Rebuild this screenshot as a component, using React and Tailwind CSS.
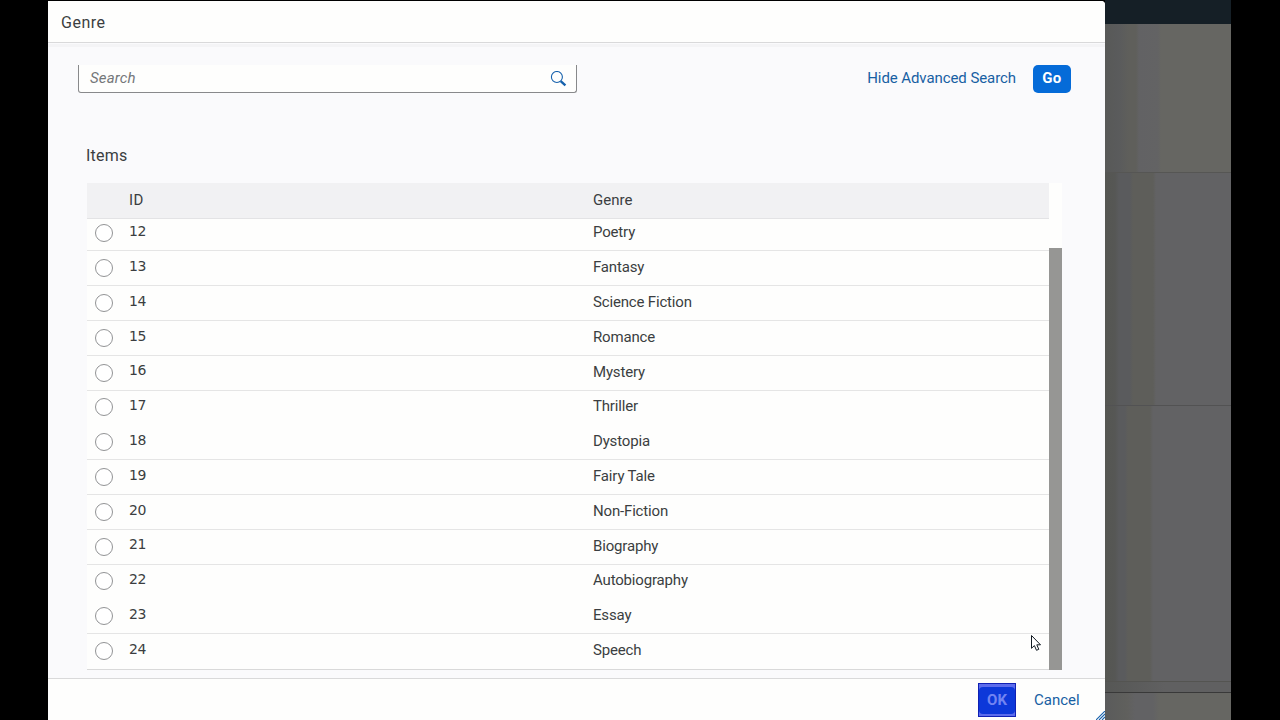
const rows = [
  { id: 12, genre: 'Poetry', cls: 'h-[32px] border-[#e5e5e5]' },
  { id: 13, genre: 'Fantasy', cls: 'h-[35px] border-[#e5e5e5]' },
  { id: 14, genre: 'Science Fiction', cls: 'h-[35px] border-[#e5e5e5]' },
  { id: 15, genre: 'Romance', cls: 'h-[35px] border-[#e5e5e5]' },
  { id: 16, genre: 'Mystery', cls: 'h-[35px] border-[#e5e5e5]', idPad: 'pb-[10px]' },
  { id: 17, genre: 'Thriller', cls: 'h-[35px] border-transparent', idPad: 'pb-[10px]', pad: 'pb-[9px]' },
  { id: 18, genre: 'Dystopia', cls: 'h-[34px] border-[#e5e5e5]' },
  { id: 19, genre: 'Fairy Tale', cls: 'h-[35px] border-[#e5e5e5]' },
  { id: 20, genre: 'Non-Fiction', cls: 'h-[35px] border-[#e5e5e5]' },
  { id: 21, genre: 'Biography', cls: 'h-[35px] border-[#e5e5e5]', idPad: 'pb-[10px]' },
  { id: 22, genre: 'Autobiography', cls: 'h-[35px] border-transparent', idPad: 'pb-[10px]', pad: 'pb-[9px]' },
  { id: 23, genre: 'Essay', cls: 'h-[34px] border-[#e5e5e5]' },
  { id: 24, genre: 'Speech', cls: 'h-[36px] border-[#d9d9d9]', idPad: 'pb-[10px]', pad: 'pb-[9px]' },
];

function Row({ id, genre, cls, idPad = 'pb-[9px]', pad = 'pb-[8px]' }) {
  return (
    <div className={`flex shrink-0 items-end border-b ${cls}`}>
      <div className={`flex w-[42px] shrink-0 pl-2 ${pad}`}>
        <span className="size-[18px] rounded-full border border-[#929395] bg-white" />
      </div>
      <div className={`w-[464px] shrink-0 font-['DejaVu_Sans',sans-serif] text-[14px] leading-5 tracking-[-0.3px] ${idPad}`}>{id}</div>
      <div className={`leading-5 tracking-[-0.17px] ${pad}`}>{genre}</div>
    </div>
  );
}

function Backdrop() {
  return (
    <div className="flex w-[126px] shrink-0 flex-col">
      <div className="h-6 bg-[#151f26]" />
      <div className="h-[148px] bg-[linear-gradient(90deg,#585957_0px,#5a5b5c_14px,#5f5f5b_24px,#5f5f5b_31px,#626264_34px,#636364_53px,#666662_56px,#666662_126px)]" />
      <div className="h-px bg-[#565654]" />
      <div className="h-[232px] bg-[linear-gradient(90deg,#555652_0px,#565755_10px,#5a5b5d_14px,#5a5b5d_25px,#5e5e5a_28px,#5e5e5a_48px,#626264_51px,#626264_126px)]" />
      <div className="h-px bg-[#525253]" />
      <div className="h-[275px] bg-[linear-gradient(90deg,#555652_0px,#565755_10px,#5a5b5d_14px,#5a5b5d_20px,#5e5e5a_23px,#5e5e5a_45px,#626264_48px,#626264_126px)]" />
      <div className="h-px bg-[#545451]" />
      <div className="h-[10px] bg-[linear-gradient(90deg,#565755,#606061_60px)]" />
      <div className="h-px bg-[#393939]" />
      <div className="flex-1 bg-[linear-gradient(90deg,#5a5b5b_0px,#60605d_22px,#626264_30px,#626264_48px,#666662_54px)]" />
    </div>
  );
}

export default function App() {
  return (
    <div className="relative flex h-[720px] w-[1280px] overflow-hidden bg-black pl-12 font-['Roboto',sans-serif] text-[15px] text-[#3b3e41]">
      <div className="mt-px flex h-[719px] w-[1057px] shrink-0 flex-col overflow-hidden rounded-tr-[4px] bg-[#fafafc]">
        <header className="flex h-[42px] shrink-0 items-center border-b border-[#d9d9da] bg-[#fefefd] pt-[2px] pl-[13px] text-[16px] tracking-[0.5px]">
          Genre
        </header>
        <div className="mt-px h-[3px] shrink-0 bg-[#f4f4f6]" />

        <div className="mt-[18px] flex h-7 shrink-0 items-center pr-[34px] pl-[30px]">
          <div className="flex h-7 w-[499px] items-center justify-between rounded-b-[3px] border-x border-b border-[#88898b] bg-[#fefefd] pr-[9px] pl-[11px]">
            <span className="text-[15px] tracking-[0.15px] text-[#74777a] italic">Search</span>
            <svg width="17" height="16" viewBox="0 0 17 16" fill="none" stroke="#1661ac">
              <circle cx="6.9" cy="6" r="5.5" strokeWidth="1.1" />
              <path d="M10.7 10.2l4.7 4.1" strokeWidth="2.4" />
            </svg>
          </div>
          <span className="ml-auto pb-[2px] tracking-[-0.08px] text-[#1760a3]">Hide Advanced Search</span>
          <button className="ml-[17px] flex h-7 w-[38px] items-center justify-center rounded-[5px] bg-[#056bd8] pb-[2px] font-bold tracking-[0.3px] text-white">Go</button>
        </div>

        <h2 className="mt-[51px] h-6 shrink-0 pl-[38px] text-[16px] leading-6 tracking-[0.2px]">Items</h2>

        <div className="mt-[15px] ml-[39px] flex h-[487px] w-[975px] shrink-0 self-start">
          <div className="flex w-[962px] flex-col bg-[#fefefd]">
            <div className="flex h-9 shrink-0 items-center border-b border-[#e3e3e5] bg-[#f1f1f3] pl-[42px]">
              <span className="w-[464px] tracking-[0.3px]">ID</span>
              <span>Genre</span>
            </div>
            {rows.map((r) => <Row key={r.id} {...r} />)}
          </div>
          <div className="flex w-[13px] flex-col justify-end bg-[#fefefd]">
            <div className="h-[422px] bg-[#969694]" />
          </div>
        </div>

        <footer className="relative mt-auto flex h-[42px] shrink-0 items-start border-t border-[#d9d9da] bg-[#fefefd] pt-1 pl-[930px]">
          <button className="flex h-[34px] w-[38px] items-center justify-center border border-[#1020b4] bg-[#5c6cec] py-[3px] font-bold text-[#7284f2]">
            <span className="flex h-[27px] w-full items-center justify-center rounded-[4px] bg-[#0d38d9]">OK</span>
          </button>
          <button className="ml-[18px] h-[34px] text-[#1760a3]">Cancel</button>
          <svg className="absolute right-0 bottom-0" width="9" height="9" viewBox="0 0 9 9" stroke="#1661ac" strokeWidth="1.1">
            <path d="M0 9L9 0M3 9L9 3M6 9L9 6" />
          </svg>
        </footer>
      </div>

      <Backdrop />

      <svg className="absolute top-[634px] left-[1030px]" width="13" height="19" viewBox="0 0 13 19">
        <path d="M1.5 1.5V14.3L4.4 11.6L6.5 16.3L8.8 15.3L6.8 10.8H10.5Z" fill="#fff" stroke="#111a22" strokeWidth="1" />
      </svg>
    </div>
  );
}
